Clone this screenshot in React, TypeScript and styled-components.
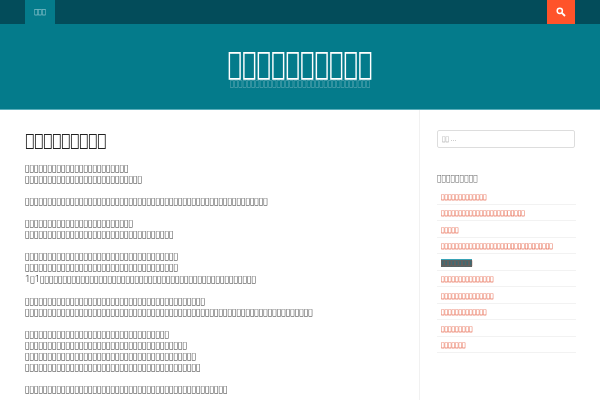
import styled, { createGlobalStyle } from "styled-components";

const GlobalStyle = createGlobalStyle`
    html, body { margin: 0; padding: 0; background: #ffffff; }
    body {
        width: 600px;
        height: 400px;
        overflow: hidden;
        font-family: "DejaVu Sans Condensed", "DejaVu Sans", sans-serif;
        color: #333333;
    }
    #root { will-change: transform; }
`;

const TopBar = styled.nav`
    height: 24px;
    padding: 0 25px;
    display: flex;
    justify-content: space-between;
    background-color: #034c5a;
`;

const NavTab = styled.a`
    width: 30px;
    display: flex;
    align-items: center;
    justify-content: center;
    background-color: #047b8b;
    color: #b5dbe1;
    font-size: 7px;
`;

const SearchButton = styled.button`
    width: 28px;
    padding: 0;
    border: none;
    display: flex;
    align-items: center;
    justify-content: center;
    background-color: #ff532a;
`;

const Header = styled.header`
    height: 86px;
    box-sizing: border-box;
    padding-top: 28px;
    display: flex;
    flex-direction: column;
    align-items: center;
    background-color: #047b8b;
    border-bottom: 1px solid #5aaeba;
`;

const SiteTitle = styled.h1`
    margin: 0;
    font-size: 26.85px;
    line-height: 22px;
    font-weight: 400;
    color: #ffffff;
    transform: scaleY(1.18);
`;

const Tagline = styled.p`
    margin: 5px 0 0;
    font-size: 7.9px;
    line-height: 9px;
    color: #6fb2bc;
`;

const Columns = styled.div`
    display: flex;
    height: 290px;
`;

const Main = styled.main`
    width: 420px;
    box-sizing: border-box;
    padding: 22px 0 0 25px;
    border-right: 1px solid #f1f1f1;
`;

const PageTitle = styled.h2`
    margin: 0 0 13px;
    font-size: 16.67px;
    line-height: 18px;
    font-weight: 400;
    color: #222222;
`;

const Paragraph = styled.p`
    margin: 0 0 11px;
    font-size: 8.33px;
    line-height: 11px;
    color: #2a2a2a;
    white-space: pre-line;
`;

const Digit = styled.span`
    font-family: Roboto, sans-serif;
    font-size: 9.5px;
    font-weight: 300;
`;

const Sidebar = styled.aside`
    flex: 1;
    box-sizing: border-box;
    padding: 20px 25px 0 17px;
`;

const SearchInput = styled.input`
    display: block;
    width: 100%;
    height: 18px;
    box-sizing: border-box;
    padding: 0 4px;
    border: 1px solid #dddddd;
    border-radius: 2px;
    font-family: "DejaVu Sans Condensed", sans-serif;
    font-size: 6.4px;

    &::placeholder {
        color: #999999;
    }
`;

const WidgetTitle = styled.h3`
    margin: 25px 0 4px;
    font-size: 8.4px;
    line-height: 11px;
    font-weight: 400;
    color: #666666;
`;

const LinkList = styled.ul`
    margin: 0 -1px 0 0;
    padding: 0;
    list-style: none;
`;

const LinkRow = styled.li`
    height: 16.5px;
    box-sizing: border-box;
    padding: 3px 0 0 4px;
    display: flex;
    align-items: center;
    border-bottom: 1px solid #f2f2f2;
`;

const RowLink = styled.a<{ $active?: boolean }>`
    font-size: 6.48px;
    line-height: 7px;
    color: ${(p) => (p.$active ? "#b0503a" : "#dc2c08")};
    ${(p) => p.$active && "background-color: #3f6a72; border-top: 1px solid #38a3b6;"}
`;

const box = (n: number) => "\uE000".repeat(n);

const paragraphs = [
    [23, 26],
    [54],
    [24, 33],
    [34, 34],
    [40, 64],
    [32, 36, 38, 39],
    [45],
];

const links = [13, 24, 5, 32, 9, 15, 15, 13, 9, 7];

function App() {
    return (
        <>
            <GlobalStyle />
            <TopBar>
                <NavTab>{box(3)}</NavTab>
                <SearchButton aria-label="search">
                    <svg width="10" height="10" viewBox="0 0 10 10" fill="none">
                        <circle cx="3.8" cy="3.8" r="2.6" stroke="#fff" strokeWidth="1.5" />
                        <path d="M5.8 5.8 L9 9" stroke="#fff" strokeWidth="1.8" />
                    </svg>
                </SearchButton>
            </TopBar>
            <Header>
                <SiteTitle>{box(10)}</SiteTitle>
                <Tagline>{box(33)}</Tagline>
            </Header>
            <Columns>
                <Main>
                    <PageTitle>{box(9)}</PageTitle>
                    {paragraphs.map((lines, i) => (
                        <Paragraph key={i}>
                            {lines.map((n) => box(n)).join("\n")}
                            {i === 3 && (
                                <>
                                    {"\n"}
                                    <Digit>1</Digit>
                                    {box(1)}
                                    <Digit>1</Digit>
                                    {box(48)}
                                </>
                            )}
                        </Paragraph>
                    ))}
                </Main>
                <Sidebar>
                    <SearchInput placeholder={`${box(2)} …`} />
                    <WidgetTitle>{box(9)}</WidgetTitle>
                    <LinkList>
                        {links.map((n, i) => (
                            <LinkRow key={i}>
                                <RowLink $active={i === 4}>{box(n)}</RowLink>
                            </LinkRow>
                        ))}
                    </LinkList>
                </Sidebar>
            </Columns>
        </>
    );
}

export default App;
